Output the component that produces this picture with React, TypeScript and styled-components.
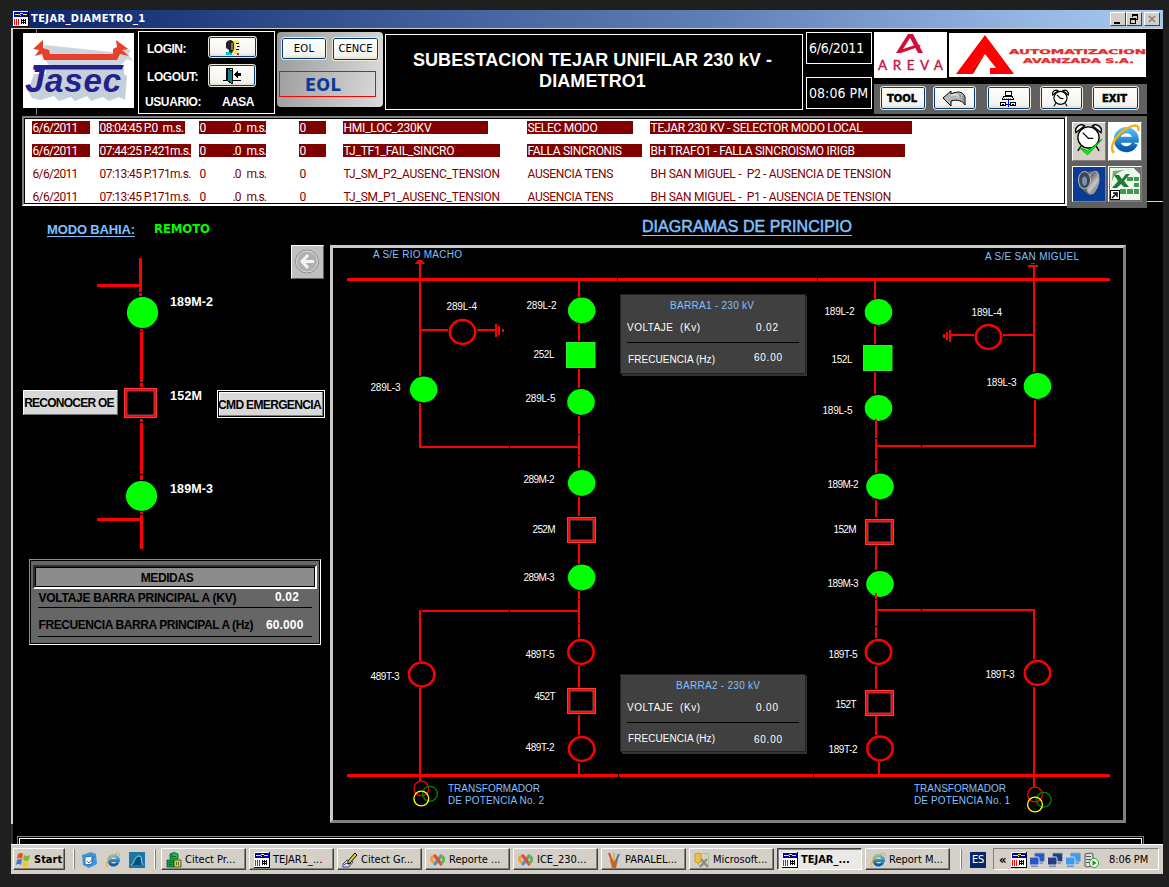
import React from "react";
import styled, { createGlobalStyle, css } from "styled-components";

const Global = createGlobalStyle`
  * { box-sizing: border-box; }
  body { margin: 0; background: #1f1f1f; overflow: hidden; font-family: "Liberation Sans", Arial, sans-serif; }
`;

const tahoma = `"DejaVu Sans Condensed", "Noto Sans", sans-serif`;

/* ---------- window frame ---------- */

const Screen = styled.div`
  display: flex;
  flex-direction: column;
  width: 1152px;
  height: 864px;
  margin: 10px 0 13px 11px;
`;

const TitleBar = styled.div`
  display: flex;
  align-items: center;
  height: 18px;
  padding: 0 3px 0 2px;
  background: linear-gradient(90deg, #0a246a 0%, #3d5a96 33%, #6080b8 62%, #8fb0de 85%, #a6caf0 100%);
`;

const WindowName = styled.span`
  flex: 1;
  margin-left: 2px;
  color: #fff;
  font: bold 11px/18px ${tahoma};
  letter-spacing: 0.4px;
  white-space: nowrap;
`;

const CaptionButton = styled.span<{ $gap?: boolean }>`
  display: flex;
  width: 16px;
  height: 14px;
  margin-left: ${(p) => (p.$gap ? 2 : 0)}px;
  background: #d4d0c8;
  border: 1px solid;
  border-color: #fff #404040 #404040 #fff;
`;

const Desktop = styled.div`
  display: flex;
  flex-direction: column;
  flex: 1;
  background: #000;
  border-top: 1px solid #d4d0c8;
  border-left: 2px solid;
  border-image: linear-gradient(#d4d0c8 795px, #303030 795px) 1;
`;

/* ---------- header ---------- */

const Header = styled.div`
  display: flex;
  align-items: flex-start;
  height: 87px;
  padding-left: 10px;
  background: linear-gradient(#808080, #808080) 23px 0 / 1px 86px no-repeat;
`;

const JasecLogo = styled.div`
  width: 111px;
  height: 75px;
  margin-top: 4px;
  background: #fff;
`;

const LoginBox = styled.div`
  display: grid;
  grid-template-columns: 62px 1fr;
  grid-template-rows: 30px 27px 24px;
  width: 137px;
  height: 83px;
  margin: 2px 0 0 4px;
  padding-left: 7px;
  border: 1px solid #fff;
  align-items: center;
`;

const LoginLabel = styled.span<{ $shift?: number; $ls?: number; $top?: number }>`
  color: #fff;
  font: bold 12px/14px "Liberation Sans", Arial, sans-serif;
  letter-spacing: ${(p) => p.$ls ?? -0.5}px;
  margin-left: ${(p) => p.$shift ?? 1}px;
  margin-top: ${(p) => p.$top ?? 4}px;
  white-space: nowrap;
`;

const XpButton = styled.div<{ $w: number; $h?: number }>`
  display: flex;
  align-items: center;
  justify-content: center;
  flex: none;
  width: ${(p) => p.$w}px;
  height: ${(p) => p.$h ?? 24}px;
  background: linear-gradient(#fff, #f4f3ee 80%, #dcd8cc);
  border: 1px solid #ece9d8;
  border-radius: 3px;
  box-shadow: inset 0 0 0 1px #003c74;
  color: #000;
  white-space: nowrap;
`;

const LoginButton = styled(XpButton)`
  justify-self: start;
`;

const SourcePanel = styled.div`
  width: 106px;
  height: 75px;
  margin: 3px 0 0 2px;
  padding: 5px 0 0 2px;
  border-radius: 4px;
  background: linear-gradient(100deg, #9a9a9a, #dcdcdc);
`;

const SourceRow = styled.div`
  display: flex;
  gap: 5px;
  padding-left: 2px;
  font: 10px/12px "DejaVu Sans", Verdana, sans-serif;
`;

const SourceButton = styled(XpButton)<{ $ls: number }>`
  letter-spacing: ${(p) => p.$ls}px;
`;

const SourceState = styled.div`
  width: 97px;
  height: 26px;
  margin-top: 10px;
  padding-left: 25px;
  border: 1px solid #f00;
  color: #0a3c96;
  font: bold 18px/26px "DejaVu Sans Condensed", "DejaVu Sans", sans-serif;
  letter-spacing: 0.3px;
`;

const PageTitle = styled.div`
  width: 418px;
  height: 76px;
  margin: 5px 0 0 2px;
  padding: 15px 3px 0 0;
  border: 1px solid #fff;
  color: #fff;
  text-align: center;
  font: bold 18px/21px "Liberation Sans", Arial, sans-serif;
  letter-spacing: 0.1px;
`;

const ClockColumn = styled.div`
  display: flex;
  flex-direction: column;
  gap: 13px;
  width: 66px;
  margin: 3px 0 0 3px;
`;

const ClockBox = styled.div<{ $ls?: number }>`
  height: 32px;
  padding-left: 2px;
  border: 1px solid #fff;
  color: #fff;
  font: 14px/30px "DejaVu Sans Condensed", "Noto Sans", sans-serif;
  letter-spacing: ${(p) => p.$ls ?? 0}px;
  white-space: nowrap;
`;

const BrandColumn = styled.div`
  display: flex;
  flex-direction: column;
  width: 273px;
  margin: 3px 0 0 2px;
`;

const BrandRow = styled.div`
  display: flex;
  gap: 2px;
  height: 46px;
`;

const Brand = styled.div<{ $w: number; $h: number; $top?: number }>`
  width: ${(p) => p.$w}px;
  height: ${(p) => p.$h}px;
  margin-top: ${(p) => p.$top ?? 0}px;
  background: #fff;
`;

const ToolRow = styled.div`
  display: flex;
  align-items: flex-start;
  height: 30px;
  margin-top: 6px;
  padding: 2px 0 0 6px;
  background: #606060;
  font: bold 10px/12px "DejaVu Sans", Verdana, sans-serif;
`;

const ToolButton = styled(XpButton)<{ $gap?: number }>`
  margin-left: ${(p) => p.$gap ?? 0}px;
  padding: 1px 2px 0 0;
  letter-spacing: 0;
  -webkit-text-stroke: 0.5px #000;
`;

/* ---------- alarm list ---------- */

const AlarmBand = styled.div`
  display: flex;
  height: 91px;
  padding-left: 9px;
`;

const AlarmList = styled.div`
  width: 1045px;
  height: 90px;
  padding: 3px 0 0 8px;
  background: #fff;
  border: 2px solid;
  border-color: #808080 #fff #fff #808080;
  box-shadow: inset 0 0 0 1px #000;
`;

const AlarmRow = styled.div<{ $active?: boolean }>`
  display: grid;
  grid-template-columns: 67px 100px 100px 44px 184px 123px 1fr;
  height: 13px;
  margin-bottom: 10px;
  color: ${(p) => (p.$active ? "#fff" : "#800000")};
  font: 12px/15px Roboto, "Liberation Sans", sans-serif;
`;

const AlarmCell = styled.span<{ $w: number; $active?: boolean; $ls?: number }>`
  display: flex;
  width: ${(p) => p.$w}px;
  height: 13px;
  padding-left: 0.5px;
  letter-spacing: ${(p) => p.$ls ?? 0}px;
  white-space: pre;
  ${(p) => p.$active && css`background: #800000;`}
`;

const Part = styled.span<{ $w: number }>`
  flex: none;
  width: ${(p) => p.$w}px;
`;

const SidePanel = styled.div`
  display: grid;
  grid-template-columns: 34px 34px;
  grid-template-rows: 39px 36px;
  gap: 5px 2px;
  width: 80px;
  height: 92px;
  padding: 6px 0 0 5px;
  background: #606060;
`;

const Tile = styled.div<{ $bg: string }>`
  display: flex;
  background: ${(p) => p.$bg};
  border: 1px solid;
  border-color: #fff #808080 #808080 #fff;
`;

const EdgeRule = styled.div`
  flex: 1;
  height: 86px;
  border-bottom: 1px solid #d4d0c8;
`;

/* ---------- body ---------- */

const Body = styled.div`
  display: flex;
  height: 617px;
`;

const BayColumn = styled.div`
  width: 317px;
`;

const BayHeader = styled.div`
  display: flex;
  height: 43px;
  padding: 15px 0 0 34px;
`;

const ModeLabel = styled.span`
  width: 107px;
  color: #80c0ff;
  font: bold 13px/15px "Liberation Sans", Arial, sans-serif;
  letter-spacing: -0.15px;
  text-decoration: underline;
  text-underline-offset: 2px;
`;

const ModeValue = styled.span`
  margin-top: -2px;
  color: #0f0;
  font: bold 13px/17px "DejaVu Sans Condensed", "Liberation Sans", sans-serif;
  letter-spacing: -0.1px;
`;

const BayBoard = styled.div`
  display: flex;
  align-items: flex-start;
  height: 307px;
  padding-left: 10px;
`;

const GreyButton = styled.div<{ $w: number; $ls: number; $framed?: boolean }>`
  flex: none;
  width: ${(p) => p.$w}px;
  height: ${(p) => (p.$framed ? 28 : 25)}px;
  margin-top: 140px;
  background: #d8d8d8;
  border: 1px solid;
  border-color: #fff #707070 #707070 #fff;
  color: #000;
  padding-right: 3px;
  text-align: center;
  font: bold 12px/24px "Liberation Sans", Arial, sans-serif;
  letter-spacing: ${(p) => p.$ls}px;
  white-space: nowrap;
  ${(p) => p.$framed && css`
    border: 1px solid #fff;
    box-shadow: inset 0 0 0 1px #000, inset -2px -2px 0 #808080, inset 2px 2px 0 #fff;
    line-height: 28px;
  `}
`;

const BaySide = styled.div`
  width: 108px;
`;

const BackButton = styled.div`
  display: flex;
  width: 33px;
  height: 34px;
  margin: -5px 0 -29px 74px;
  background: #c0c0c0;
  border: 1px solid;
  border-color: #fff #606060 #606060 #fff;
`;

const BayDrawing = styled.svg`
  flex: none;
  overflow: visible;
`;

const Measures = styled.div`
  width: 292px;
  height: 86px;
  margin: 2px 0 0 16px;
  padding: 5px 3px 0 3px;
  background: #666;
  border: 1px solid;
  border-color: #909090 #fff #fff #909090;
  box-shadow: inset 0 0 0 1px #000;
`;

const MeasuresTitle = styled.div`
  height: 24px;
  padding-right: 16px;
  border: 2px solid;
  border-color: #303030 #fff #fff #303030;
  box-shadow: inset 0 0 0 1px #000;
  background: #8c8c8c;
  text-align: center;
  font: bold 12px/22px "Liberation Sans", Arial, sans-serif;
  letter-spacing: -0.4px;
`;

const MeasureRow = styled.div<{ $h: number; $line: number; $ls: number }>`
  display: flex;
  align-items: flex-start;
  width: 274px;
  height: ${(p) => p.$h}px;
  margin-left: 5px;
  padding-left: 0.5px;
  border-bottom: 1px solid #000;
  font: bold 12px/${(p) => p.$line}px "Liberation Sans", Arial, sans-serif;
  letter-spacing: ${(p) => p.$ls}px;
  white-space: nowrap;
`;

const MeasureValue = styled.span<{ $right: number; $line?: number }>`
  margin-left: auto;
  margin-right: ${(p) => p.$right}px;
  color: #fff;
  letter-spacing: 0.15px;
  ${(p) => p.$line && css`line-height: ${p.$line}px;`}
`;

const DiagramColumn = styled.div`
  width: 796px;
`;

const DiagramTitle = styled.div`
  height: 38px;
  padding: 10px 0 0 312px;
  color: #80c0ff;
  font: 16px/19px "Liberation Sans", Arial, sans-serif;
  letter-spacing: 0.05px;
  -webkit-text-stroke: 0.5px #80c0ff;
  text-decoration: underline;
  text-underline-offset: 3px;
`;

const DiagramFrame = styled.div`
  width: 796px;
  height: 578px;
  border: 3px solid;
  border-color: #c8c8c8 #808080 #808080 #c8c8c8;
`;

const BottomFrame = styled.div`
  width: 1127px;
  height: 8px;
  margin: 12px 0 0 4px;
  border: 1px solid #808080;
  border-bottom: none;
  &::before {
    content: "";
    display: block;
    height: 6px;
    margin: 1px 1px 0 1px;
    border: 1px solid #fff;
    border-bottom: none;
  }
`;

/* ---------- taskbar ---------- */

const Taskbar = styled.div`
  display: flex;
  align-items: flex-start;
  height: 30px;
  padding: 3px 3px 0 2px;
  background: #d4d0c8;
  border-top: 1px solid #fff;
  font: 11px/20px ${tahoma};
`;

const TaskButton = styled.div<{ $w: number; $gap?: number; $pressed?: boolean; $bold?: boolean }>`
  display: flex;
  align-items: center;
  gap: 3px;
  flex: none;
  width: ${(p) => p.$w}px;
  height: 22px;
  margin-left: ${(p) => p.$gap ?? 3}px;
  padding: 1px 0 0 ${(p) => (p.$bold && !p.$pressed ? 2 : 4)}px;
  border: 1px solid;
  border-color: ${(p) => (p.$pressed ? "#404040 #fff #fff #404040" : "#fff #404040 #404040 #fff")};
  box-shadow: ${(p) => (p.$pressed ? "inset 1px 1px 0 #808080" : "inset -1px -1px 0 #808080")};
  background: ${(p) => (p.$pressed ? "#ebe9e5" : "#d4d0c8")};
  font-weight: ${(p) => (p.$bold ? "bold" : "normal")};
  letter-spacing: 0;
  white-space: nowrap;
`;

const Divider = styled.span<{ $gap: number }>`
  flex: none;
  width: 2px;
  height: 20px;
  margin: 1px 0 0 ${(p) => p.$gap}px;
  background: linear-gradient(90deg, #fff 50%, #808080 50%);
`;

const QuickLaunch = styled.div`
  display: flex;
  gap: 8px;
  margin: 4px 0 0 6px;
`;

const Language = styled.span`
  width: 16px;
  height: 16px;
  margin: 4px 0 0 8px;
  background: #0a246a;
  color: #fff;
  text-align: center;
  line-height: 16px;
  letter-spacing: -0.3px;
`;

const Tray = styled.div`
  display: flex;
  align-items: center;
  gap: 2px;
  width: 166px;
  height: 22px;
  margin-left: 7px;
  padding: 1px 0 0 5px;
  border: 1px solid;
  border-color: #808080 #fff #fff #808080;
`;

const TrayArrow = styled.span`
  width: 10px;
  font-weight: bold;
  font-size: 13px;
`;

const TrayTime = styled.span`
  margin-left: 8px;
  white-space: nowrap;
  letter-spacing: -0.1px;
`;

/* ---------- icons ---------- */

const CitectIcon = () => (
  <svg width="16" height="16" viewBox="0 0 16 16" shapeRendering="crispEdges">
    <rect width="16" height="16" fill="#000" />
    <rect width="15" height="15" fill="#fff" />
    <rect x="1" y="1" width="14" height="5" fill="#0000a0" />
    <g fill="#ff0">
      <rect x="2" y="3" width="5" height="1" />
      <rect x="7" y="2" width="3" height="1" />
      <rect x="7" y="4" width="1" height="1" />
      <rect x="10" y="3" width="4" height="1" />
    </g>
    <g fill="#f00">
      <rect x="1" y="8" width="1" height="6" />
      <rect x="3" y="8" width="1" height="6" />
      <rect x="5" y="8" width="1" height="6" />
    </g>
    <g fill="#000">
      {[8, 10, 12].map((y) =>
        [8, 10, 12].map((x) => <rect key={`${x}-${y}`} x={x} y={y} width="1" height="1" />)
      )}
      <rect x="8" y="9" width="5" height="1" />
      <rect x="8" y="11" width="5" height="1" />
    </g>
  </svg>
);

const IeIcon = ({ size = 16 }: { size?: number }) => (
  <svg width={size} height={size} viewBox="0 0 32 32">
    <defs>
      <linearGradient id="ie" x1="0" y1="0" x2="0" y2="1">
        <stop offset="0" stopColor="#4cbcf4" />
        <stop offset="1" stopColor="#0a58a8" />
      </linearGradient>
    </defs>
    <path d="M26 20.500A9.500 9.500 0 1 1 26.800 16.800H11" fill="none" stroke="url(#ie)" strokeWidth="6" />
    <path d="M5 30C-1 24 8 10 19 5c7-4 12-3 10 3" fill="none" stroke="#f5b21c" strokeWidth="2.500" />
  </svg>
);

const UsersIcon = () => (
  <svg width="18" height="16" viewBox="0 0 18 16">
    <path d="M9 2q5-2 6 1l1 4-1 5-2 1v2H9z" fill="#ffe23c" />
    <path d="M12 4l3 0 .5 3-.5 5-3 0z" fill="#fff" />
    <path d="M12 4.500h3M13 7.500h2.500M12 10.500h3" stroke="#000" fill="none" />
    <path d="M2 4q1-3 5-3 3 1 3 5v4l-2 4H5v-3L2 9z" fill="#222" />
    <path d="M7 4h2v7H7z" fill="#777" />
    <path d="M2 13h3l3 1v2H2z" fill="#00c8d8" />
    <path d="M13 14h2v2h-2z" fill="#d02020" />
  </svg>
);

const DoorIcon = () => (
  <svg width="20" height="17" viewBox="0 0 20 17" shapeRendering="crispEdges">
    <path d="M1 13.500h4M10 13.500h9M10.500 1v12M4.500 1v12M4 1.500h7" stroke="#000" fill="none" />
    <path d="M5 1l5 3v13l-5-4z" fill="#0a8484" stroke="#000" />
    <path d="M12 7l4-4v3h3v3h-3v3z" fill="#000" />
  </svg>
);

const BackArrowIcon = () => (
  <svg width="24" height="17" viewBox="0 0 24 17">
    <path d="M1 8L9 1v3c6-3 12-3 14 3v8c-2-4-8-6-14-4v5z" fill="#b8b8b8" stroke="#000" />
    <path d="M9 5c4 0 8-2 9 5" fill="none" stroke="#fff" />
    <path d="M18 4v7M21 6v7" stroke="#777" />
  </svg>
);

const NetworkIcon = () => (
  <svg width="18" height="18" viewBox="0 0 18 18" fill="none" shapeRendering="crispEdges">
    <path d="M6 1.500h6v4h-6zM6 1v5M5 6.500h8M3.500 9.500h11M5 6.500l-2 3M13 6.500l2 3" stroke="#000" />
    <path d="M5 8h8" stroke="#888" strokeDasharray="1 1" />
    <path d="M9 10v7M6 14.500h6" stroke="#00f" />
    <rect x="1.500" y="12.500" width="5" height="3" rx="1" stroke="#000" />
    <rect x="11.500" y="12.500" width="5" height="3" rx="1" stroke="#000" />
    <path d="M3 14h2M13 14h2" stroke="#000" />
  </svg>
);

const AlarmClockIcon = ({ size, checked }: { size: number; checked?: boolean }) => (
  <svg width={size} height={checked ? size * 1.15 : size} viewBox={checked ? "0 0 32 37" : "0 0 32 32"}>
    <g fill="#fff" stroke="#000" strokeWidth={checked ? 1.4 : 2}>
      <path d="M3 10a6 6 0 0 1 9-7zM29 10a6 6 0 0 0-9-7z" />
      <path d="M8 24l-3 5M24 24l3 5" />
      <circle cx="16" cy="15" r="11" />
      <path d="M10 10l6 6h5" fill="none" />
    </g>
    {checked && <path d="M6 25l9 8L30 17 15 29z" fill="#0f0" stroke="#00a000" strokeWidth="1" />}
  </svg>
);

const SpeakerIcon = () => (
  <svg width="32" height="34" viewBox="0 0 32 34">
    <defs>
      <linearGradient id="cone" x1="0" y1="0" x2="1" y2="1">
        <stop offset="0" stopColor="#333" />
        <stop offset="0.600" stopColor="#c8c8c8" />
        <stop offset="1" stopColor="#555" />
      </linearGradient>
    </defs>
    <path d="M6 8l12-4 6 3 1 10-4 10-5 1-10-8z" fill="#666" />
    <ellipse cx="20" cy="15.500" rx="5.500" ry="11.500" fill="url(#cone)" stroke="#aaa" transform="rotate(14 20 15.500)" />
    <ellipse cx="11.500" cy="13" rx="6" ry="8.500" fill="#3c4654" stroke="#bbb" />
    <ellipse cx="11.500" cy="14" rx="2.500" ry="4.500" fill="#7c90b0" />
  </svg>
);

const ExcelIcon = () => (
  <svg width="32" height="34" viewBox="0 0 32 34">
    <path d="M1 1h24l6 6v26H1z" fill="#eef6ee" />
    <path d="M25 1h7v7z" fill="#707070" />
    <path d="M2 22C2 8 10 2 24 2L4 4z" fill="#6db36d" />
    <g fill="#3f9a4c">
      <rect x="18" y="10" width="6" height="4" /><rect x="25" y="10" width="5" height="4" />
      <rect x="25" y="16" width="5" height="4" /><rect x="18" y="22" width="6" height="5" />
      <rect x="25" y="22" width="5" height="5" /><rect x="11" y="22" width="6" height="5" />
    </g>
    <path d="M5 8h5l3 4 4-5h4l-6 7 5 6h-5l-3-3-4 4H3l6-7z" fill="#1d7a33" />
    <rect x="1.500" y="23.500" width="9" height="9" fill="#fff" stroke="#000" />
    <path d="M3 31l4-4M4 26h4v4" stroke="#000" fill="none" strokeWidth="1.500" />
  </svg>
);

const StartFlag = () => (
  <svg width="15" height="15" viewBox="0 0 15 15">
    <path d="M2 2q3-2 5 0l-1 5q-3-2-5 0z" fill="#e8502c" />
    <path d="M8 3q3 2 6 0l-1 5q-3 2-6 0z" fill="#7dbb32" />
    <path d="M1 8q3-2 5 0l-1 5q-3-2-5 0z" fill="#3a7ad8" />
    <path d="M7 9q3 2 6 0l-1 5q-3 2-6 0z" fill="#f2c52e" />
  </svg>
);

const DesktopIcon = () => (
  <svg width="16" height="16" viewBox="0 0 16 16">
    <path d="M1 3l9-3 5 2 1 10-8 4-6-3z" fill="#3d97e0" />
    <path d="M4 5l7-1v8l-7 1z" fill="#fff" stroke="#2a6cb0" />
    <path d="M6 9l2 2 6-7" stroke="#2a6cb0" fill="none" />
  </svg>
);

const SharkIcon = () => (
  <svg width="16" height="16" viewBox="0 0 16 16">
    <rect width="16" height="16" fill="#1878a8" />
    <path d="M2 13c3 0 3-9 8-9 4 0 1 5 4 9" fill="#0a4f78" stroke="#9fd8f0" />
  </svg>
);

const CubesIcon = () => (
  <svg width="16" height="16" viewBox="0 0 16 16">
    <g stroke="#033" strokeWidth=".7">
      <path d="M4 2l4-1.500L12 2v5H4z" fill="#16c04c" />
      <path d="M1 8h7v7H1z" fill="#0fa040" />
      <path d="M8 8h7v7H8z" fill="#d8d020" />
    </g>
    <path d="M6 4.500h4M6 2.500v3M3 10.500h3M3 12.500h3" stroke="#063" fill="none" />
    <path d="M10.500 10v3M12.500 10v3" stroke="#663" />
  </svg>
);

const PencilIcon = () => (
  <svg width="16" height="16" viewBox="0 0 16 16">
    <path d="M1 12l4-4 6 2-4 5H1z" fill="#dde" stroke="#446" />
    <path d="M2 13c3-4 4 1 7-2" stroke="#33c" fill="none" />
    <path d="M6 9l7-8 2 2-7 8-2 1z" fill="#e8d820" stroke="#000" />
  </svg>
);

const ReportIcon = () => (
  <svg width="16" height="16" viewBox="0 0 16 16" fill="none" strokeLinecap="round">
    <path d="M3 10C0 7 2 4 5 4" stroke="#f0a030" strokeWidth="3" />
    <path d="M5 12l6-8" stroke="#4a90d8" strokeWidth="3" />
    <path d="M5 4l6 8" stroke="#e05030" strokeWidth="3.200" />
    <path d="M11 4c3 1 4 4 1 7" stroke="#5fb848" strokeWidth="3" />
  </svg>
);

const BrushesIcon = () => (
  <svg width="16" height="16" viewBox="0 0 16 16">
    <path d="M4 8h8l-2 8H6z" fill="#c06a28" />
    <path d="M3 1l3 8" stroke="#d8402c" strokeWidth="2" />
    <path d="M8 1v8" stroke="#e8b040" strokeWidth="2" />
    <path d="M13 2l-3 7" stroke="#4878c0" strokeWidth="2" />
  </svg>
);

const ToolsIcon = () => (
  <svg width="16" height="16" viewBox="0 0 16 16">
    <rect x="4.500" y="1.500" width="10" height="12" fill="none" stroke="#6c4" strokeDasharray="1 1" />
    <path d="M1 2q3-2 6 0v8q-3 2-6 0z" fill="#f0c23c" stroke="#b08018" strokeWidth=".6" />
    <path d="M6 15l7-8M7 7l7 8" stroke="#888" strokeWidth="2" />
  </svg>
);

const MonitorsIcon = ({ tone }: { tone: string }) => (
  <svg width="16" height="16" viewBox="0 0 16 16">
    <rect x="5.500" y="1" width="10" height="8.500" rx="1" fill={tone} stroke="#9ab" />
    <path d="M9 10h5v2H9z" fill="#99a" />
    <rect x=".5" y="5" width="9.500" height="8" rx="1" fill={tone} stroke="#cde" />
    <path d="M2 13.500h7V15H2z" fill="#889" />
  </svg>
);

const ServerIcon = () => (
  <svg width="16" height="16" viewBox="0 0 16 16">
    <path d="M2 2l6-1 2 1v12l-6 1-2-1z" fill="#ddd" stroke="#555" />
    <path d="M3 4.500h5M3 7.500h5M3 10.500h5" stroke="#555" />
    <circle cx="11" cy="11" r="4.500" fill="#fff" stroke="#393" />
    <path d="M9.500 8l4 3-4 3z" fill="#0a0" />
  </svg>
);

/* ---------- drawing primitives ---------- */

type P = { x: number; y: number };
const RED = "#f00";

const Closed = ({ x, y, rx = 13.8, ry = 12.9 }: P & { rx?: number; ry?: number }) => (
  <ellipse cx={x} cy={y} rx={rx} ry={ry} fill="#0f0" />
);
const Open = ({ x, y }: P) => (
  <ellipse cx={x} cy={y} rx="12.700" ry="11.900" fill="none" stroke={RED} strokeWidth="2.500" />
);
const BreakerOpen = ({ x, y, w = 29, h = 26 }: P & { w?: number; h?: number }) => (
  <g fill="none">
    <rect x={x + 1.5} y={y + 1.5} width={w - 3} height={h - 3} stroke={RED} strokeWidth="3" />
    <rect x={x + 0.5} y={y + 0.5} width={w - 1} height={h - 1} stroke="#ff6060" strokeWidth="1" opacity=".6" />
    <rect x={x + 3} y={y + 3} width={w - 6} height={h - 6} stroke="#a06060" strokeWidth=".8" />
  </g>
);
const BreakerClosed = ({ x, y }: P) => (
  <rect x={x + 0.5} y={y + 0.5} width="28.500" height="25" fill="#0f0" stroke="#30f030" />
);

const VLine = ({ x, runs, w = 2 }: { x: number; runs: number[][]; w?: number }) => (
  <g fill={RED} shapeRendering="crispEdges">
    {runs.map(([a, b]) => (
      <rect key={a} x={x} y={a} width={w} height={b - a} />
    ))}
  </g>
);
const HLine = ({ y, runs, w = 2 }: { y: number; runs: number[][]; w?: number }) => (
  <g fill={RED} shapeRendering="crispEdges">
    {runs.map(([a, b]) => (
      <rect key={a} x={a} y={y} width={b - a} height={w} />
    ))}
  </g>
);

const Tag = styled.text<{ $blue?: boolean }>`
  font: 10px "Liberation Sans", Arial, sans-serif;
  fill: ${(p) => (p.$blue ? "#80c0ff" : "#fff")};
`;

const BayTag = styled.text`
  font: bold 12.500px "Liberation Sans", Arial, sans-serif;
  fill: #fff;
`;

const tags: [string, number, number, number][] = [
  ["289L-4", 446, 310, 30.5], ["289L-2", 526, 309, 30], ["252L", 533, 358, 21],
  ["289L-5", 525, 402, 30], ["289L-3", 370, 391, 30], ["289M-2", 523, 483, 31],
  ["252M", 532, 533, 23], ["289M-3", 523, 581, 31], ["489T-5", 525, 658, 29],
  ["489T-3", 370, 680, 29], ["452T", 534, 700, 21], ["489T-2", 525, 751, 29],
  ["189L-2", 824, 315, 30], ["189L-4", 971, 316, 30.5], ["152L", 831, 363, 21],
  ["189L-3", 986, 386, 30], ["189L-5", 822, 414, 30], ["189M-2", 827, 488, 31],
  ["152M", 833, 533, 23], ["189M-3", 827, 587, 31], ["189T-5", 828, 658, 29],
  ["189T-3", 985, 678, 29], ["152T", 835, 708, 21], ["189T-2", 828, 753, 29],
];

const captions: [string, number, number, number][] = [
  ["A S/E RIO MACHO", 373, 258, 89], ["A S/E SAN MIGUEL", 985, 260, 94],
  ["TRANSFORMADOR", 448, 792, 92], ["DE POTENCIA No. 2", 448, 804, 96],
  ["TRANSFORMADOR", 914, 792, 92], ["DE POTENCIA No. 1", 914, 804, 96],
];

type BarraProps = { y: number; h: number; title: string; titleX: number; volts: string; rows: number[] };
const Barra = ({ y, h, title, titleX, volts, rows }: BarraProps) => (
  <g>
    <rect x="622" y={y + 2} width="185" height={h} fill="#333" />
    <rect x="620.500" y={y + 0.5} width="185" height={h - 1} fill="#404040" stroke="#222" />
    <Tag $blue x={titleX} y={y + 15} textLength="84">{title}</Tag>
    <Tag x="627" y={rows[0]} textLength="73" xmlSpace="preserve">VOLTAJE  (Kv)</Tag>
    <Tag x="756" y={rows[0]} textLength="22">{volts}</Tag>
    <rect x="627" y={rows[1]} width="172" height="1" fill="#000" />
    <Tag x="628" y={rows[2]} textLength="87">FRECUENCIA (Hz)</Tag>
    <Tag x="754" y={rows[3]} textLength="28">60.00</Tag>
  </g>
);

const Transformer = ({ x, y }: P) => (
  <g fill="none" strokeWidth="1.300">
    <circle cx={x} cy={y} r="7.400" stroke={RED} />
    <circle cx={x + 8.7} cy={y + 5.3} r="7.400" stroke="#008000" />
    <circle cx={x} cy={y + 10} r="7.400" stroke="#ff0" />
  </g>
);

const Sheet = styled.svg`
  display: block;
`;

const SingleLine = () => (
  <Sheet width="790" height="572" viewBox="333 248 790 572">
    <HLine y={278} w={3} runs={[[347, 617], [618, 817], [818, 1110]]} />
    <HLine y={774} w={3} runs={[[347, 618], [619, 813], [814, 1110]]} />

    <path d="M418 260h4l3 4h-10z" fill={RED} />
    <VLine x={419} runs={[[263, 376], [403, 448], [610, 661], [688, 781]]} />
    <HLine y={446} runs={[[419, 509], [510, 580]]} />
    <HLine y={610} runs={[[422, 509], [510, 580]]} />
    <HLine y={329} runs={[[421, 448], [477, 496]]} />
    <VLine x={495} runs={[[324, 337]]} />
    <VLine x={498} runs={[[326, 335]]} />
    <VLine x={502} runs={[[329, 332]]} />
    <VLine
      x={578}
      runs={[[280, 297], [324, 341], [369, 388], [416, 434], [435, 455], [456, 468], [497, 516], [544, 564],
        [591, 599], [600, 623], [624, 638], [666, 687], [715, 735], [763, 775]]}
    />
    <Open x={462.5} y={332} />
    <Closed x={423.7} y={389.5} />
    <Closed x={581.7} y={310.5} />
    <BreakerClosed x={566} y={342} />
    <Closed x={581} y={402} />
    <Closed x={581.7} y={483} />
    <BreakerOpen x={567} y={517} />
    <Closed x={581.7} y={577.5} />
    <Open x={581} y={652} />
    <BreakerOpen x={567} y={688} />
    <Open x={581.7} y={749} />
    <Open x={421.7} y={674.5} />
    <Transformer x={421.3} y={788.5} />

    <Closed x={878.5} y={312} />
    <BreakerClosed x={863} y={345} />
    <Closed x={878.5} y={408} />
    <Closed x={880} y={486.5} />
    <BreakerOpen x={865} y={519} />
    <Closed x={880} y={584} />
    <Open x={878.5} y={652} />
    <BreakerOpen x={865} y={690} />
    <Open x={880} y={748.5} />
    <Open x={988.5} y={337} />
    <Closed x={1037.5} y={386} />
    <Open x={1037.5} y={673} />
    <Transformer x={1035} y={794.5} />
    <VLine x={874} runs={[[281, 299], [326, 344], [372, 394]]} />
    <VLine
      x={875}
      runs={[[419, 438], [439, 459], [460, 473], [500, 517], [546, 570], [593, 599], [600, 626], [627, 638],
        [666, 689], [716, 735]]}
    />
    <VLine x={878} runs={[[762, 775]]} />
    <VLine x={1033} runs={[[265, 372], [610, 659], [687, 787]]} />
    <VLine x={1034} runs={[[400, 447]]} />
    <HLine y={265} runs={[[1028, 1038]]} />
    <HLine y={263} w={1} runs={[[1031, 1035]]} />
    <HLine y={445} runs={[[876, 921], [922, 1036]]} />
    <HLine y={609} runs={[[876, 921], [922, 1035]]} />
    <HLine y={334} runs={[[951, 974], [1003, 1034]]} />
    <VLine x={949} runs={[[330, 342]]} />
    <VLine x={946} runs={[[332, 340]]} />
    <VLine x={943} runs={[[334, 338]]} />

    {tags.map(([t, x, y, w]) => (
      <Tag key={t + x} x={x + 0.5} y={y} textLength={w}>{t}</Tag>
    ))}
    {captions.map(([t, x, y, w]) => (
      <Tag key={t + x} x={x} y={y} textLength={w} $blue>{t}</Tag>
    ))}
    <Barra y={294} h={80} title="BARRA1 - 230 kV" titleX={670} volts="0.02" rows={[331, 342, 363, 361]} />
    <Barra y={674} h={78} title="BARRA2 - 230 kV" titleX={676} volts="0.00" rows={[711, 722, 742, 743]} />
  </Sheet>
);

const Bay = () => (
  <BayDrawing width="99" height="307" viewBox="118 250 99 307">
    <HLine y={284} w={3} runs={[[97, 142]]} />
    <HLine y={518} w={3} runs={[[97, 142]]} />
    <VLine x={139} w={3} runs={[[258, 292], [293, 296]]} />
    <VLine
      x={140}
      w={3}
      runs={[[329, 331], [332, 382], [383, 387], [419, 422], [423, 474], [475, 480], [512, 514], [515, 549]]}
    />
    <Closed x={142.5} y={312.5} rx={15.6} ry={15.4} />
    <BreakerOpen x={124} y={388} w={33} h={30} />
    <Closed x={141.5} y={496} rx={15.6} ry={15} />
    <BayTag x="170" y="306" textLength="43">189M-2</BayTag>
    <BayTag x="170" y="400" textLength="32">152M</BayTag>
    <BayTag x="170" y="493" textLength="43">189M-3</BayTag>
  </BayDrawing>
);

/* ---------- data ---------- */

type Alarm = { on?: boolean; time: string; tag: string; kind: string; text: string; w: number[] };
const alarms: Alarm[] = [
  { on: true, time: "08:04:45 P.0  m.s.", tag: "HMI_LOC_230KV", kind: "SELEC MODO", text: "TEJAR 230 KV - SELECTOR MODO LOCAL", w: [86, 145, 106, 262] },
  { on: true, time: "07:44:25 P.421m.s.", tag: "TJ_TF1_FAIL_SINCRO", kind: "FALLA SINCRONIS", text: "BH TRAFO1 - FALLA SINCROISMO IRIGB", w: [92, 157, 115, 255] },
  { time: "07:13:45 P.171m.s.", tag: "TJ_SM_P2_AUSENC_TENSION", kind: "AUSENCIA TENS", text: "BH SAN MIGUEL -  P2 - AUSENCIA DE TENSION", w: [92, 160, 115, 255] },
  { time: "07:13:45 P.171m.s.", tag: "TJ_SM_P1_AUSENC_TENSION", kind: "AUSENCIA TENS", text: "BH SAN MIGUEL -  P1 - AUSENCIA DE TENSION", w: [92, 160, 115, 255] },
];

const tasks: [string, React.ReactNode][] = [
  ["Citect Pr...", <CubesIcon />],
  ["TEJAR1_...", <CitectIcon />],
  ["Citect Gr...", <PencilIcon />],
  ["Reporte ...", <ReportIcon />],
  ["ICE_230...", <ReportIcon />],
  ["PARALEL...", <BrushesIcon />],
  ["Microsoft...", <ToolsIcon />],
  ["TEJAR_...", <CitectIcon />],
  ["Report M...", <IeIcon />],
];

export default function App() {
  return (
    <>
      <Global />
      <Screen>
        <TitleBar>
          <CitectIcon />
          <WindowName>TEJAR_DIAMETRO_1</WindowName>
          <CaptionButton>
            <svg width="14" height="12"><path d="M3 9h6v2H3z" fill="#000" /></svg>
          </CaptionButton>
          <CaptionButton>
            <svg width="14" height="12" fill="none" stroke="#000" shapeRendering="crispEdges">
              <path d="M5.500 4V1.500h5v5H9M5 2.500h6M3.500 5.500h5v5h-5zM3 5.500h6M3 6.500h6" />
            </svg>
          </CaptionButton>
          <CaptionButton $gap>
            <svg width="14" height="12"><path d="M4 3l6 6M10 3l-6 6" stroke="#808080" strokeWidth="1.500" /></svg>
          </CaptionButton>
        </TitleBar>

        <Desktop>
          <Header>
            <JasecLogo>
              <svg width="111" height="75" viewBox="0 0 111 75" fontFamily="Liberation Sans" fontWeight="bold" fontStyle="italic">
                <path d="M22 12l-2 12 6 8 72 0 6-6 6 2-5-7 3-3-11-8 1 10z" fill="#ccd6de" />
                <path d="M5 58l6-17h12v-6h78v6l3 2-2 24-6-3-10 4-6-4-12 4-4-5-12 5-4-4-12 4-5-5-14 4-8-2z" fill="#c4d0da" />
                <path d="M20 7L10 16l6 1-4 6 7-2 2 6h73l3-6 9 2-7-6 6-1-12-9 1 7-4 2 0 5H27l-1-4-6-2z" fill="#e8402c" />
                <path d="M11 32h90l-2 4.500H10z" fill="#25208c" />
                <text x="2" y="59" fontSize="35" fill="#25208c" textLength="20">J</text>
                <text x="22" y="59" fontSize="33" fill="#25208c" textLength="76">asec</text>
              </svg>
            </JasecLogo>

            <LoginBox>
              <LoginLabel>LOGIN:</LoginLabel>
              <LoginButton $w={49} $h={22}><UsersIcon /></LoginButton>
              <LoginLabel $ls={-0.4} $top={3}>LOGOUT:</LoginLabel>
              <LoginButton $w={48} $h={23}><DoorIcon /></LoginButton>
              <LoginLabel $shift={-1} $ls={-0.4} $top={1}>USUARIO:</LoginLabel>
              <LoginLabel $shift={14} $ls={-0.5} $top={1}>AASA</LoginLabel>
            </LoginBox>

            <SourcePanel>
              <SourceRow>
                <SourceButton $w={46} $h={23} $ls={0.2}>EOL</SourceButton>
                <SourceButton $w={47} $h={24} $ls={0}>CENCE</SourceButton>
              </SourceRow>
              <SourceState>EOL</SourceState>
            </SourcePanel>

            <PageTitle>SUBESTACION TEJAR UNIFILAR 230 kV -<br />DIAMETRO1</PageTitle>

            <ClockColumn>
              <ClockBox $ls={-0.2}>6/6/2011</ClockBox>
              <ClockBox $ls={0.05}>08:06 PM</ClockBox>
            </ClockColumn>

            <BrandColumn>
              <BrandRow>
                <Brand $w={73} $h={46}>
                  <svg width="73" height="46" viewBox="0 0 73 46">
                    <path d="M22 21L34 2h5l10 19h-5L36 6l-7 11 15-5 3 2-20 7z" fill="#d0103a" />
                    <text x="4" y="38" fontSize="13.500" fontFamily="Lato" fill="#c01848" stroke="#c01848" strokeWidth=".4" textLength="65">AREVA</text>
                  </svg>
                </Brand>
                <Brand $w={197} $h={44} $top={1}>
                  <svg width="197" height="44" viewBox="0 0 197 44" fontFamily="DejaVu Sans" fontWeight="bold">
                    <path d="M7 41L36 2l29 39H41v-6h6L36 21 24 35v6z" fill="#f00" />
                    <path d="M24 35l12-14-12 20z" fill="#c00" />
                    <text x="60" y="21" fontSize="6.500" fill="#e03030" stroke="#e03030" strokeWidth=".3" textLength="137" lengthAdjust="spacingAndGlyphs">AUTOMATIZACION</text>
                    <text x="74" y="29.500" fontSize="6.500" fill="#e03030" stroke="#e03030" strokeWidth=".3" textLength="111" lengthAdjust="spacingAndGlyphs">AVANZADA  S.A.</text>
                  </svg>
                </Brand>
              </BrandRow>
              <ToolRow>
                <ToolButton $w={46}>TOOL</ToolButton>
                <ToolButton $w={43} $gap={7}><BackArrowIcon /></ToolButton>
                <ToolButton $w={44} $gap={11}><NetworkIcon /></ToolButton>
                <ToolButton $w={43} $gap={9}><AlarmClockIcon size={19} /></ToolButton>
                <ToolButton $w={47} $gap={9}>EXIT</ToolButton>
              </ToolRow>
            </BrandColumn>
          </Header>

          <AlarmBand>
            <AlarmList>
              {alarms.map((a) => (
                <AlarmRow key={a.tag} $active={a.on}>
                  <AlarmCell $w={58} $active={a.on} $ls={-0.65}>6/6/2011</AlarmCell>
                  <AlarmCell $w={a.w[0]} $active={a.on} $ls={-0.55}>{a.time}</AlarmCell>
                  <AlarmCell $w={67} $active={a.on} $ls={-0.9}>
                    <Part $w={33}>0</Part><Part $w={14}>.0</Part><Part $w={19}>m.s.</Part>
                  </AlarmCell>
                  <AlarmCell $w={27} $active={a.on}>0</AlarmCell>
                  <AlarmCell $w={a.w[1]} $active={a.on} $ls={-0.22}>{a.tag}</AlarmCell>
                  <AlarmCell $w={a.w[2]} $active={a.on} $ls={-0.3}>{a.kind}</AlarmCell>
                  <AlarmCell $w={a.w[3]} $active={a.on} $ls={-0.27}>{a.text}</AlarmCell>
                </AlarmRow>
              ))}
            </AlarmList>
            <SidePanel>
              <Tile $bg="#d4d0c8"><AlarmClockIcon size={31} checked /></Tile>
              <Tile $bg="#fff"><IeIcon size={32} /></Tile>
              <Tile $bg="#0a3c96"><SpeakerIcon /></Tile>
              <Tile $bg="#707070"><ExcelIcon /></Tile>
            </SidePanel>
            <EdgeRule />
          </AlarmBand>

          <Body>
            <BayColumn>
              <BayHeader>
                <ModeLabel>MODO BAHIA:</ModeLabel>
                <ModeValue>REMOTO</ModeValue>
              </BayHeader>
              <BayBoard>
                <GreyButton $w={95} $ls={-0.75}>RECONOCER OE</GreyButton>
                <Bay />
                <BaySide>
                  <BackButton>
                    <svg width="31" height="32" viewBox="0 0 31 32">
                      <circle cx="15" cy="15.500" r="11.500" fill="#b0b0b0" stroke="#8c8c8c" />
                      <circle cx="15" cy="15.500" r="10.500" fill="none" stroke="#ddd" />
                      <path d="M16 9l-6 6.500 6 6.500M10 15.500h12" fill="none" stroke="#f4f4f4" strokeWidth="3" />
                    </svg>
                  </BackButton>
                  <GreyButton $w={108} $ls={-0.65} $framed>CMD EMERGENCIA</GreyButton>
                </BaySide>
              </BayBoard>
              <Measures>
                <MeasuresTitle>MEDIDAS</MeasuresTitle>
                <MeasureRow $h={19} $line={18} $ls={-0.27}>
                  VOLTAJE BARRA PRINCIPAL A (KV)<MeasureValue $right={13} $line={17}>0.02</MeasureValue>
                </MeasureRow>
                <MeasureRow $h={29} $line={35} $ls={-0.42}>
                  FRECUENCIA BARRA PRINCIPAL A (Hz)<MeasureValue $right={8.5}>60.000</MeasureValue>
                </MeasureRow>
              </Measures>
            </BayColumn>
            <DiagramColumn>
              <DiagramTitle>DIAGRAMAS DE PRINCIPIO</DiagramTitle>
              <DiagramFrame><SingleLine /></DiagramFrame>
            </DiagramColumn>
          </Body>
          <BottomFrame />
        </Desktop>

        <Taskbar>
          <TaskButton $w={52} $gap={0} $bold><StartFlag />Start</TaskButton>
          <Divider $gap={8} />
          <QuickLaunch><DesktopIcon /><IeIcon /><SharkIcon /></QuickLaunch>
          <Divider $gap={9} />
          {tasks.map(([name, icon], i) => (
            <TaskButton key={name} $w={85} $gap={i === 0 ? 5 : 3} $pressed={i === 7} $bold={i === 7}>
              {icon}{name}
            </TaskButton>
          ))}
          <Divider $gap={10} />
          <Language>ES</Language>
          <Tray>
            <TrayArrow>«</TrayArrow>
            <CitectIcon />
            <MonitorsIcon tone="#2858c8" />
            <MonitorsIcon tone="#283c80" />
            <MonitorsIcon tone="#3c9cf0" />
            <ServerIcon />
            <TrayTime>8:06 PM</TrayTime>
          </Tray>
        </Taskbar>
      </Screen>
    </>
  );
}
